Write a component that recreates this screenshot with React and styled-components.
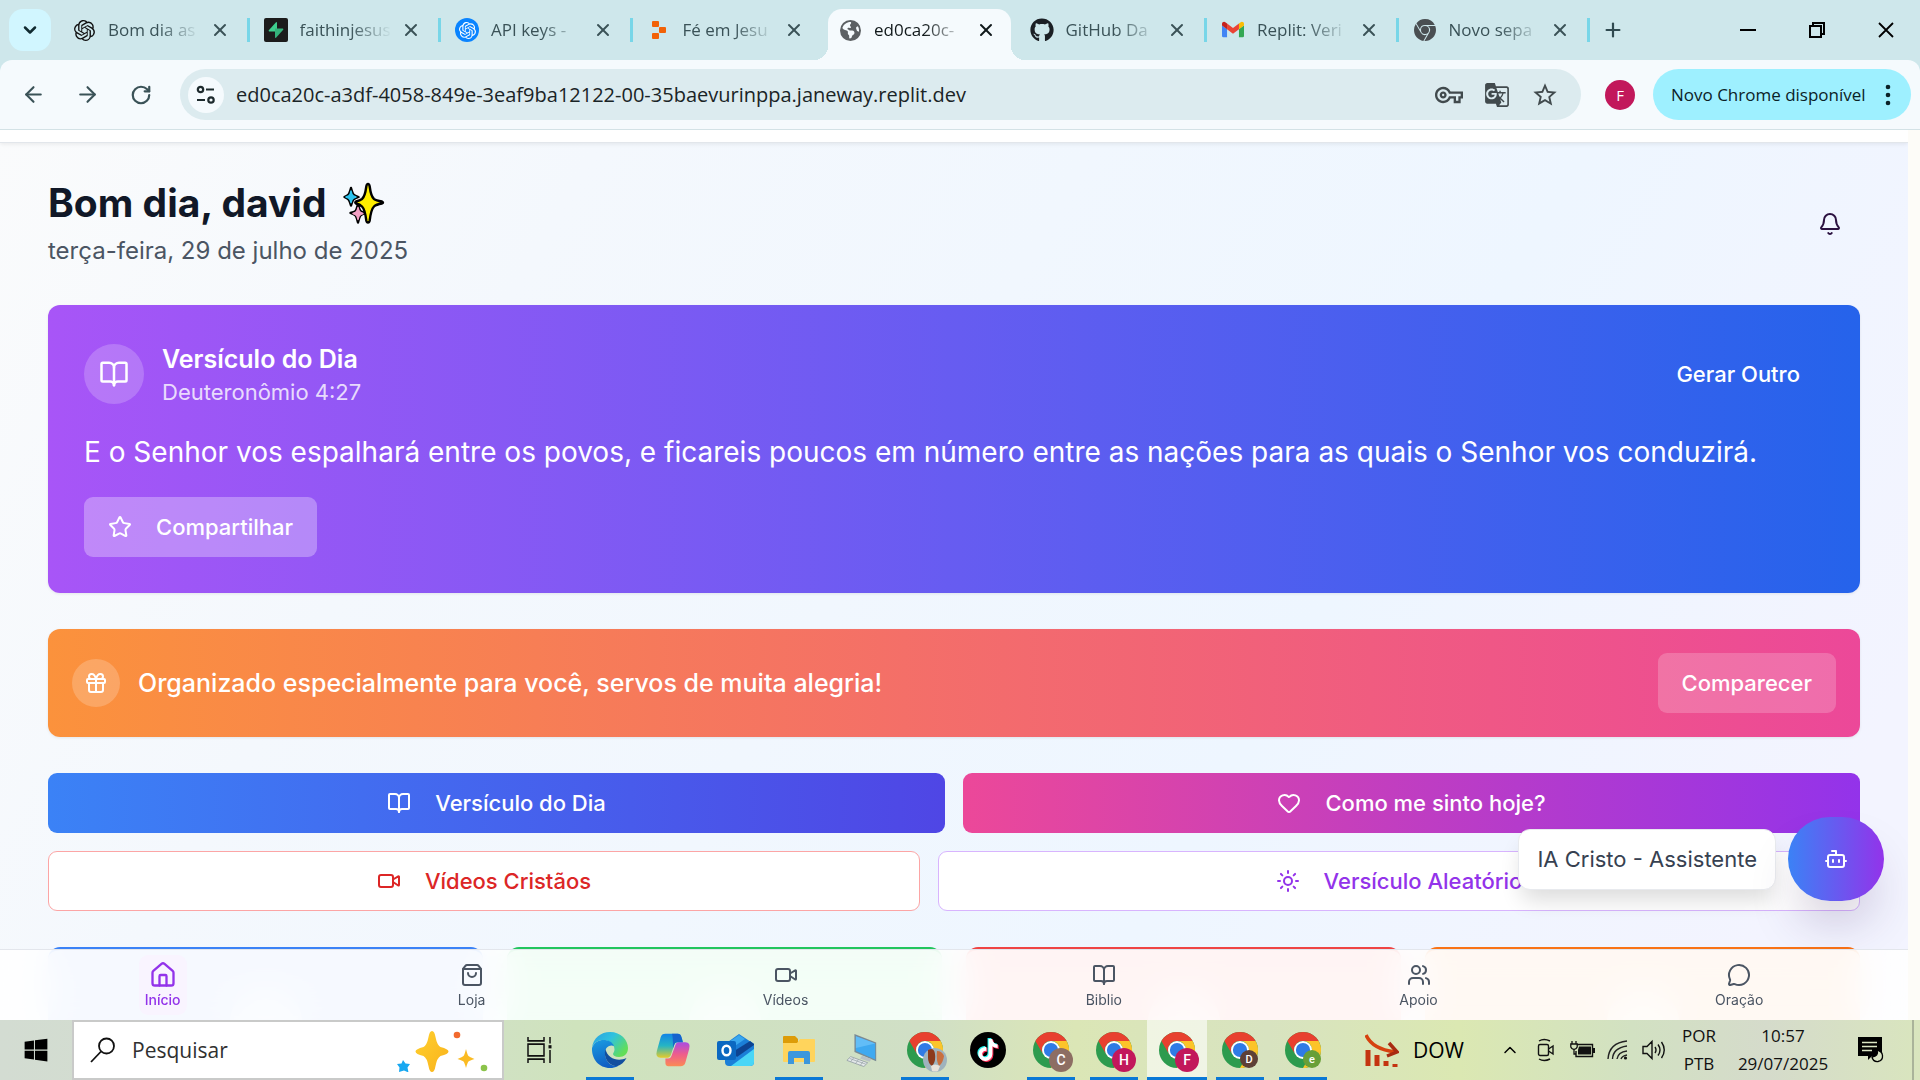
import React from "react";
import styled, { createGlobalStyle, css } from "styled-components";
import {
  ArrowLeft, ArrowRight, Bell, BookOpen, Bot, ChevronDown, ChevronUp, Gift, Heart, House,
  MessageCircle, Plus, RotateCw, ShoppingBag, Star, Sun, Users, Video, X,
} from "lucide-react";
import { SiOpenai, SiGooglechrome } from "react-icons/si";
import { FaGithub, FaEarthAmericas, FaWindows, FaTiktok } from "react-icons/fa6";
import { MdGTranslate, MdOutlineVpnKey, MdStarBorder } from "react-icons/md";

const appFont = `Inter, "Open Sans", sans-serif`;
const systemFont = `"Open Sans", "Noto Sans", sans-serif`;

const GlobalStyle = createGlobalStyle`
  *, *::before, *::after { box-sizing: border-box; }
  body { margin: 0; font-family: ${systemFont}; overflow: hidden; }
  h1, h2, p { margin: 0; }
  button { border: 0; padding: 0; background: none; font: inherit; color: inherit; cursor: pointer; }
  input { font: inherit; }
  a { color: inherit; text-decoration: none; }
  svg { display: block; flex: none; }
`;

const Screen = styled.div`
  height: 100vh;
  display: grid;
  grid-template-columns: minmax(0, 1fr);
  grid-template-rows: auto minmax(0, 1fr) auto;
`;

/* ---------- Browser window ---------- */

const Browser = styled.header`
  background: #cee7eb;
`;

const TabStrip = styled.div`
  height: 60px;
  display: flex;
  align-items: stretch;
`;

const TabSearch = styled.button`
  width: 42px;
  height: 42px;
  margin: 9px 5px 9px 9px;
  border-radius: 14px;
  background: #d1f6ff;
  color: #0f2a30;
  display: grid;
  place-items: center;
`;

const Tabs = styled.div`
  flex: 1;
  display: flex;
  min-width: 0;
`;

const Tab = styled.div`
  flex: 1 1 0;
  min-width: 0;
  position: relative;
  display: flex;
  align-items: center;
  padding: 0 16px;
  color: ${(p) => (p.$active ? "#10181a" : "#3a5257")};

  ${(p) => p.$divider && css`
    &::after {
      content: "";
      position: absolute;
      right: -2px;
      top: 18px;
      width: 3px;
      height: 24px;
      background: #78d6e8;
    }
  `}
`;

const TabShape = styled.div`
  position: absolute;
  inset: 9px 3px 0 6px;
  border-radius: 14px 14px 0 0;
  background: #f5fafd;

  &::before, &::after {
    content: "";
    position: absolute;
    bottom: 0;
    width: 14px;
    height: 14px;
  }
  &::before { left: -14px; background: radial-gradient(circle at 0 0, transparent 14px, #f5fafd 14px); }
  &::after { right: -14px; background: radial-gradient(circle at 100% 0, transparent 14px, #f5fafd 14px); }
`;

const TabIcon = styled.span`
  position: relative;
  width: 24px;
  height: 24px;
  margin-right: 12px;
  display: grid;
  place-items: center;
  flex: none;
`;

const TabTitle = styled.button`
  position: relative;
  flex: 1;
  min-width: 0;
  overflow: hidden;
  white-space: nowrap;
  text-align: left;
  font-size: 17px;
  line-height: 26px;
  mask-image: linear-gradient(to right, #000 50px, transparent 92px);
`;

const TabClose = styled.button`
  position: relative;
  width: 24px;
  height: 24px;
  display: grid;
  place-items: center;
`;

const BlueDisc = styled.span`
  width: 24px;
  height: 24px;
  border-radius: 50%;
  background: #0a84ff;
  color: #fff;
  display: grid;
  place-items: center;
`;

const StripEnd = styled.div`
  width: 332px;
  display: flex;
  justify-content: space-between;
`;

const NewTab = styled.button`
  width: 50px;
  display: grid;
  place-items: center;
  color: #304a50;
`;

const WindowButtons = styled.div`
  display: flex;
`;

const WindowButton = styled.button`
  width: 69px;
  display: grid;
  place-items: center;
  color: #000;
`;

const Toolbar = styled.div`
  height: 70px;
  padding: 9px 9px 9px 6px;
  display: flex;
  align-items: center;
  background: #f5fafd;
  border-radius: 12px 12px 0 0;
  border-bottom: 1px solid #d3e2e6;
`;

const ToolButton = styled.button`
  width: 54px;
  height: 51px;
  display: grid;
  place-items: center;
  color: #3a5257;
`;

const Omnibox = styled.label`
  flex: 1;
  height: 51px;
  margin-left: 12px;
  padding: 0 12px 0 8px;
  display: flex;
  align-items: center;
  background: #dcebef;
  border-radius: 26px;
`;

const SiteInfo = styled.button`
  width: 36px;
  height: 36px;
  border-radius: 50%;
  background: #f5fafd;
  display: grid;
  place-items: center;
`;

const UrlInput = styled.input`
  flex: 1;
  min-width: 0;
  margin-left: 12px;
  padding: 0;
  border: 0;
  outline: 0;
  background: none;
  font-size: 20px;
  line-height: 30px;
  color: #1a2426;
`;

const OmniButton = styled.button`
  width: 48px;
  height: 48px;
  display: grid;
  place-items: center;
  color: #414a4d;
`;

const Profile = styled.button`
  width: 30px;
  height: 30px;
  margin: 0 18px 0 24px;
  border-radius: 50%;
  background: #c2185b;
  color: #fff;
  font-size: 15px;
`;

const UpdateButton = styled.button`
  height: 51px;
  width: 258px;
  padding: 0 20px 0 18px;
  display: flex;
  align-items: center;
  justify-content: space-between;
  border-radius: 26px;
  background: #9ef0ff;
  color: #0b2227;
  font-size: 17px;
  white-space: nowrap;
`;

/* ---------- Page ---------- */

const Viewport = styled.div`
  min-height: 0;
  display: flex;
  background: #fdfcf8;
`;

const Page = styled.div`
  position: relative;
  flex: 1;
  min-width: 0;
  margin-right: 12px;
  overflow: hidden;
  font-family: ${appFont};
  background: linear-gradient(120deg, #fafbfc 0%, #f4f8fd 25%, #eef6ff 66%, #f3f4ff 92%);
`;

const PageTop = styled.div`
  height: 13px;
  background: #fff;
  border-bottom: 1px solid #e2e6eb;
  box-shadow: 0 1px 4px rgba(0, 0, 0, 0.08);
`;

const Content = styled.main`
  padding: 36px 48px;
  display: flex;
  flex-direction: column;
  gap: 36px;
`;

const Greeting = styled.div`
  display: flex;
  align-items: center;
  justify-content: space-between;
`;

const GreetingTitle = styled.h1`
  display: flex;
  align-items: center;
  gap: 16px;
  margin-bottom: 6px;
  font-size: 39px;
  line-height: 48px;
  font-weight: 700;
  color: #111827;
`;

const Today = styled.p`
  font-size: 24px;
  line-height: 36px;
  color: #4b5563;
`;

const BellButton = styled.button`
  width: 60px;
  height: 60px;
  display: grid;
  place-items: center;
  color: #2b1140;
`;

const VerseCard = styled.section`
  padding: 36px;
  border-radius: 12px;
  background: linear-gradient(to right, #a855f7, #2563eb);
  color: #fff;
  display: flex;
  flex-direction: column;
  align-items: flex-start;
  gap: 24px;
  box-shadow: 0 1px 3px rgba(0, 0, 0, 0.08);
`;

const VerseHead = styled.div`
  width: 100%;
  display: flex;
  align-items: center;
  gap: 18px;
`;

const Disc = styled.span`
  width: ${(p) => p.$size}px;
  height: ${(p) => p.$size}px;
  flex: none;
  border-radius: 50%;
  background: rgba(255, 255, 255, 0.2);
  display: grid;
  place-items: center;
`;

const VerseTitles = styled.div`
  flex: 1;
`;

const VerseTitle = styled.h2`
  font-size: 25px;
  line-height: 36px;
  font-weight: 600;
`;

const VerseRef = styled.p`
  font-size: 22px;
  line-height: 30px;
  color: rgba(255, 255, 255, 0.8);
`;

const VerseText = styled.p`
  font-size: 28px;
  line-height: 42px;
`;

const CardButton = styled.button`
  height: 60px;
  padding: 0 24px;
  display: flex;
  align-items: center;
  gap: 24px;
  border-radius: 9px;
  background: ${(p) => (p.$ghost ? "none" : `rgba(255, 255, 255, ${p.$tint})`)};
  font-size: 22px;
  font-weight: 500;
  color: #fff;
`;

const Banner = styled.section`
  padding: 24px;
  display: flex;
  align-items: center;
  gap: 18px;
  border-radius: 12px;
  background: linear-gradient(to right, #fb923c, #ec4899);
  color: #fff;
  box-shadow: 0 1px 3px rgba(0, 0, 0, 0.08);
`;

const BannerText = styled.p`
  flex: 1;
  font-size: 25px;
  line-height: 36px;
  font-weight: 500;
`;

const Actions = styled.div`
  display: grid;
  gap: 18px;
`;

const ActionRow = styled.div`
  display: grid;
  grid-template-columns: ${(p) => p.$columns};
  gap: 18px;
`;

const Action = styled.button`
  height: 60px;
  display: flex;
  align-items: center;
  justify-content: center;
  gap: 24px;
  border-radius: 9px;
  font-size: 22px;
  font-weight: 500;
  color: #fff;
  background: linear-gradient(to right, ${(p) => p.$from}, ${(p) => p.$to});
`;

const OutlineAction = styled(Action)`
  background: #fff;
  border: 1px solid ${(p) => p.$line};
  color: ${(p) => p.$ink};
`;

const Tiles = styled.div`
  display: grid;
  grid-template-columns: repeat(4, 1fr);
  gap: 24px;
`;

const Tile = styled.section`
  height: 210px;
  padding-top: 36px;
  display: flex;
  justify-content: center;
  border-radius: 12px;
  border-top: 3px solid ${(p) => p.$edge};
  background: ${(p) => p.$fill};
`;

const TileSpot = styled.span`
  width: 72px;
  height: 72px;
  border-radius: 50%;
  background: rgba(255, 255, 255, 0.5);
`;

const Nav = styled.nav`
  position: absolute;
  left: 0;
  right: 0;
  bottom: 0;
  height: 71px;
  padding: 0 6px;
  display: flex;
  justify-content: space-around;
  align-items: center;
  background: rgba(255, 255, 255, 0.85);
  backdrop-filter: blur(16px);
  border-top: 1px solid #e3e6ec;
`;

const NavLink = styled.a`
  padding: 6px;
  display: flex;
  flex-direction: column;
  align-items: center;
  gap: 2px;
  border-radius: 9px;
  font-size: 14px;
  line-height: 18px;
  font-weight: ${(p) => (p.$active ? 500 : 400)};
  color: ${(p) => (p.$active ? "#9333ea" : "#4b5563")};
  background: ${(p) => (p.$active ? "rgba(250, 240, 255, 0.6)" : "none")};
`;

const NavIcon = styled.span`
  height: 28px;
  display: grid;
  place-items: center;
`;

const Assistant = styled.div`
  position: absolute;
  right: 24px;
  bottom: 119px;
  display: flex;
  align-items: center;
  gap: 12px;
`;

const AssistantHint = styled.span`
  height: 61px;
  padding: 0 18px;
  display: flex;
  align-items: center;
  background: #fff;
  border: 1px solid #e8eaee;
  border-radius: 12px;
  font-size: 22px;
  font-weight: 400;
  color: #374151;
  box-shadow: 0 14px 22px -4px rgba(0, 0, 0, 0.14);
`;

const AssistantButton = styled.button`
  width: 96px;
  height: 84px;
  border-radius: 42px;
  display: grid;
  place-items: center;
  color: #fff;
  background: linear-gradient(to right, #3b82f6, #9333ea);
  box-shadow: 0 30px 50px -12px rgba(60, 30, 90, 0.25);
`;

/* ---------- Taskbar ---------- */

const Taskbar = styled.footer`
  height: 60px;
  display: flex;
  align-items: stretch;
  background: linear-gradient(to right, #d3dcd2 0%, #d2dfcb 20%, #cfe3bd 30%, #d0dfc6 48%, #dbe6b6 56%, #d8e3c0 66%, #dbe8b2 76%, #d2e1c2 85%, #d5dbcb 92%, #d9e5be 100%);
  color: #000;
`;

const StartButton = styled.button`
  width: 72px;
  display: grid;
  place-items: center;
`;

const SearchBox = styled.label`
  width: 432px;
  padding: 0 13px 0 16px;
  display: flex;
  align-items: center;
  gap: 16px;
  background: #fff;
  border: 2px solid #c9cac9;
`;

const SearchInput = styled.input`
  flex: 1;
  min-width: 0;
  padding: 0;
  border: 0;
  outline: 0;
  background: none;
  font-size: 21px;
  color: #303030;
  &::placeholder { color: #303030; opacity: 1; }
`;

const TaskView = styled.button`
  width: 76px;
  padding-right: 4px;
  display: grid;
  place-items: center;
`;

const AppButtons = styled.div`
  display: flex;
  gap: 3px;
`;

const AppButton = styled.button`
  width: 60px;
  position: relative;
  display: grid;
  place-items: center;
  background: ${(p) => (p.$active ? "rgba(255, 255, 255, 0.6)" : "none")};

  ${(p) => p.$running && css`
    &::after {
      content: "";
      position: absolute;
      bottom: 0;
      left: ${p.$active ? 0 : 6}px;
      right: ${p.$active ? 0 : 6}px;
      height: 3px;
      background: #0a78d6;
    }
  `}
`;

const ChromeApp = styled.span`
  position: relative;
  display: block;
`;

const Badge = styled.span`
  position: absolute;
  right: ${(p) => (p.$small ? 0 : -4)}px;
  bottom: ${(p) => (p.$small ? 0 : -4)}px;
  width: ${(p) => (p.$small ? 18 : 24)}px;
  height: ${(p) => (p.$small ? 18 : 24)}px;
  border-radius: 50%;
  background: ${(p) => p.$fill};
  color: #fff;
  font: 500 ${(p) => (p.$small ? 11 : 14)}px/1 Roboto, sans-serif;
  display: grid;
  place-items: center;
`;

const Tray = styled.div`
  margin-left: auto;
  display: flex;
  align-items: center;
`;

const Market = styled.button`
  display: flex;
  align-items: center;
  gap: 14px;
  margin-right: 28px;
  font-size: 21px;
`;

const TrayButton = styled.button`
  width: 36px;
  height: 60px;
  display: grid;
  place-items: center;
`;

const TrayText = styled.button`
  width: ${(p) => p.$width}px;
  font-size: 17px;
  line-height: 28px;
  text-align: center;
  color: #111;
`;

const Notifications = styled.button`
  width: 72px;
  height: 60px;
  padding-right: 10px;
  display: grid;
  place-items: center;
`;

const ShowDesktop = styled.button`
  width: 8px;
  height: 60px;
  border-left: 2px solid #aab39a;
`;

/* ---------- Drawings ---------- */

const SparklesArt = () => (
  <svg width="42" height="42" viewBox="0 0 42 42" stroke="#000" strokeWidth="2.400" strokeLinejoin="round">
    <path d="M15 22q1.500 6 2.500 7 1 1 5 2-4 1.500-5 2.500-1 1-2.500 7-1.500-6-2.500-7-1-1-5-2.500 4-1 5-2 1-1 2.500-7Z" fill="#000" />
    <path d="M15 25.500q.6 4 2.500 5l2.500 1-2.500 1q-1.900 1-2.500 5-.6-4-2.500-5l-2.500-1 2.500-1q1.900-1 2.500-5Z" fill="#f4a0c4" stroke="#f4a0c4" strokeWidth="1.500" />
    <path d="M8 6q1.500 5.500 2.500 6.500 1 1 5 2.500-4 1.500-5 2.500Q9.500 18.500 8 23.500q-1.500-5-2.500-6-1-1-4-2.500 3-1.500 4-2.500Q6.500 11.500 8 6Z" fill="#000" />
    <path d="M8 9q.6 4 2.500 5l2.500 1-2.500 1q-1.900 1-2.500 4.500-.6-3.500-2.500-4.500L3 15l2.500-1Q7.400 13 8 9Z" fill="#2cc4f0" stroke="#2cc4f0" strokeWidth="1.500" />
    <path d="M25 2q1.300 0 1.700 2.500Q28 14.500 31 17q2 1.500 8 2.500 2 1 0 2-6 1-8 3-3 3-4.300 14Q26.300 40.500 25 40.500T23.300 38.500Q22 27.500 19 24.500q-2-2-6-3-1.500-1 0-2 4-1 6-2.500 3-2.500 4.300-12.500Q23.700 2 25 2Z" fill="#ffee00" />
  </svg>
);

const SupabaseArt = () => (
  <svg width="24" height="24" viewBox="0 0 24 24">
    <rect width="24" height="24" rx="2" fill="#1c1c1c" />
    <path d="M13 4.500v9H5.200q-1-.3-.4-1.300L12 4.300q.8-.6 1 .2Z" fill="#3ecf8e" />
    <path d="M11 19.500v-9h7.800q1 .3.4 1.300L12 19.700q-.8.6-1-.2Z" fill="#34b27b" />
  </svg>
);

const ReplitArt = () => (
  <svg width="24" height="24" viewBox="0 0 24 24" fill="#f26207">
    <rect x="5" y="3" width="7" height="6" rx="1" />
    <rect x="12" y="9" width="7" height="6" rx="1" />
    <rect x="5" y="15" width="7" height="6" rx="1" />
  </svg>
);

const GmailArt = () => (
  <svg width="22" height="22" viewBox="0 0 24 24">
    <path d="M0 7v11.500Q0 20 1.500 20H5.500V11Z" fill="#4285f4" />
    <path d="M24 7v11.500q0 1.500-1.500 1.500H18.500V11Z" fill="#34a853" />
    <path d="M18.500 5v6.200L24 7V5.500C24 3 21.500 2.500 20 3.700Z" fill="#fbbc04" />
    <path d="M5.500 5v6.200L0 7V5.500C0 3 2.500 2.500 4 3.700Z" fill="#c5221f" />
    <path d="M5.500 11.200V5L12 9.800 18.500 5v6.200L12 16Z" fill="#ea4335" />
  </svg>
);

const TuneArt = () => (
  <svg width="20" height="22" viewBox="0 0 20 22" fill="none" stroke="#1d2a2d" strokeWidth="2.200">
    <circle cx="4.500" cy="5.500" r="2.700" /><path d="M10 5.500h8M1 16h8" /><circle cx="15" cy="16" r="2.700" />
  </svg>
);

const DotsArt = () => (
  <svg width="6" height="22" viewBox="0 0 6 22" fill="#0b2227">
    <circle cx="3" cy="3" r="2.300" /><circle cx="3" cy="11" r="2.300" /><circle cx="3" cy="19" r="2.300" />
  </svg>
);

const MinimizeArt = () => (
  <svg width="16" height="16" viewBox="0 0 16 16"><path d="M0 8h16" stroke="#000" strokeWidth="2" /></svg>
);

const RestoreArt = () => (
  <svg width="16" height="16" viewBox="0 0 16 16" fill="none" stroke="#000" strokeWidth="2">
    <path d="M1 4h11v11H1zM4 4V1h11v11h-3" />
  </svg>
);

const CloseArt = () => (
  <svg width="16" height="16" viewBox="0 0 16 16"><path d="M1 1l14 14M15 1L1 15" stroke="#000" strokeWidth="1.800" /></svg>
);

const LensArt = () => (
  <svg width="26" height="26" viewBox="0 0 26 26" fill="none" stroke="#111" strokeWidth="1.800">
    <circle cx="16.500" cy="9" r="7.500" /><path d="M11 14.500L1 25" />
  </svg>
);

const SearchArt = () => (
  <svg width="92" height="44" viewBox="0 0 92 44">
    <defs>
      <linearGradient id="gold" x1="0" y1="0" x2="1" y2="1">
        <stop offset="0" stopColor="#ffd02e" /><stop offset="1" stopColor="#f9b21c" />
      </linearGradient>
    </defs>
    <path d="M35 3q2.500 0 3.500 6 1.500 8 5 10 8 2 8 4.500t-8 4.500q-3.500 2-5 10-1 6-3.500 6t-3.500-6q-1.500-8-5-10-8-2-8-4.500t8-4.500q3.500-2 5-10 1-6 3.500-6Z" fill="url(#gold)" />
    <path d="M69 21q1.500 6 2.500 7 1 1 6 3-5 1.500-6 2.500T69 40q-1.500-5.500-2.500-6.500t-6-2.500q5-2 6-3 1-1 2.500-7Z" fill="#fbbb22" />
    <path d="M6 32l2.500 3.500 4.500.5-2.500 3.500 1 5-4.500-2-5 1.500.5-4.500L0 36l4.500-.5Z" fill="#18a8f1" />
    <circle cx="60" cy="7" r="3.300" fill="#f26a2e" /><circle cx="87" cy="40" r="3.300" fill="#8bc34a" />
  </svg>
);

const TaskViewArt = () => (
  <svg width="26" height="28" viewBox="0 0 26 26" preserveAspectRatio="none" fill="none" stroke="#111" strokeWidth="1.500">
    <path d="M1 7.500h16v11H1zM1 1v3.500h16V1M1 25v-3.500h16V25M23 1v6M23 13v12" />
    <path d="M21.500 8.500h3v3h-3z" fill="#111" stroke="none" />
  </svg>
);

const EdgeArt = () => (
  <svg width="38" height="38" viewBox="0 0 38 38">
    <defs>
      <linearGradient id="edgeTop" x1="0" y1="0" x2="1" y2=".6">
        <stop offset="0" stopColor="#2a9fe0" /><stop offset=".5" stopColor="#2fc2df" /><stop offset="1" stopColor="#62de58" />
      </linearGradient>
      <linearGradient id="edgeLow" x1="0" y1="0" x2=".3" y2="1">
        <stop offset="0" stopColor="#1b9de2" /><stop offset="1" stopColor="#0f5fc4" />
      </linearGradient>
    </defs>
    <path d="M1 17C2 7 10 1 19 1c11 0 18 8 18 16 0 6-4 9-9 9-4 0-6-1.500-6-3 0-1 1.500-2 1.500-4.500C23.500 13 18 9 12 9 6 9 2 13 1 17Z" fill="url(#edgeTop)" />
    <path d="M1 17C3 11 8 9 12.500 9c5 0 9 2 10.500 6-4-2-9 1-9 7 0 8 6 14 13 13-3 1.500-5 2-8 2C8 37 .5 28 1 17Z" fill="url(#edgeLow)" />
    <path d="M14.500 18C12 26 17 35 26 35.300c4-1.300 7.500-4.300 9.500-8.300-8 4-19 1-21-9Z" fill="#124f9f" />
  </svg>
);

const CopilotArt = () => (
  <svg width="36" height="34" viewBox="0 0 38 40" preserveAspectRatio="none">
    <defs>
      <linearGradient id="copA" x1="0" y1="0" x2="0" y2="1">
        <stop offset="0" stopColor="#1384e6" /><stop offset=".5" stopColor="#25b5c4" /><stop offset="1" stopColor="#e4cb2b" />
      </linearGradient>
      <linearGradient id="copB" x1="0" y1="0" x2="0" y2="1">
        <stop offset="0" stopColor="#a94de2" /><stop offset=".5" stopColor="#ee5d8c" /><stop offset="1" stopColor="#fb8a55" />
      </linearGradient>
    </defs>
    <path d="M11 1h13q3 0 4 4l1.500 6H24q-3 0-4 4l-3 10q-1 4-4 4H6q-6 0-4-8L6 5q1-4 5-4Z" fill="url(#copA)" />
    <path d="M27 39H14q-3 0-3-4v-5h3q3 0 4-5l3-9q1-5 4-5h7q6 0 4 8l-4 16q-1 4-5 4Z" fill="url(#copB)" />
    <path d="M18 1h6q3 0 4 4l1.500 6H24q-3 0-4 4l-1 3q0-13-1-17Z" fill="#1657c9" opacity=".8" />
  </svg>
);

const OutlookArt = () => (
  <svg width="38" height="34" viewBox="0 0 38 34">
    <path d="M8 11L22 1l15 10v18q0 4-4 4H12q-4 0-4-4Z" fill="#1b7fd8" />
    <path d="M12 9l10-7 6 4-16 11ZM37 11l-4-3-19 13 4 4Z" fill="#39a7ee" />
    <path d="M37 12L20 24l-6-4 19-12 4 3Z" fill="#0d4391" />
    <path d="M37 16v13q0 4-4 4H14Z" fill="#49d6f7" />
    <rect y="8" width="19" height="19" rx="2" fill="#0b68c1" />
    <ellipse cx="9.500" cy="17.500" rx="4" ry="4.800" fill="none" stroke="#fff" strokeWidth="2.400" />
  </svg>
);

const FolderArt = () => (
  <svg width="34" height="30" viewBox="0 0 34 30">
    <path d="M1 2q0-1 1-1h11l3 3v6H1Z" fill="#dd9c08" />
    <path d="M1 8h14l3-4h14q1 0 1 1v21q0 1-1 1H2q-1 0-1-1Z" fill="#ffd45c" />
    <path d="M6 29V18q0-2 2-2h18q2 0 2 2v11h-6v-6H12v6Z" fill="#3c97dc" />
  </svg>
);

const PcArt = () => (
  <svg width="34" height="34" viewBox="0 0 34 36">
    <path d="M9 1l23 9v20L9 20Z" fill="#7a8a94" /><path d="M10.500 3.500L31 11v17L10.500 19Z" fill="#3fa9f0" />
    <path d="M10.500 3.500L31 11 10.500 16Z" fill="#62bdf7" />
    <path d="M17 24l10 3.500-2 3-10-3.500Z" fill="#b8c1c6" /><path d="M5 25l18 6.500-4 4L1 29Z" fill="#e4e8ea" stroke="#8c989e" strokeWidth=".8" />
    <path d="M4 27l17 6M8 26.500l-3 4M13 28.500l-3 4M18 30.500l-3 4" stroke="#98a3a8" strokeWidth=".8" />
  </svg>
);

const ChromeArt = () => (
  <svg width="36" height="36" viewBox="2 2 44 44">
    <circle cx="24" cy="24" r="22" fill="#2d9b4e" />
    <path d="M24 13H43.050A22 22 0 0 0 4.950 13L14.470 29.500A11 11 0 0 1 24 13Z" fill="#e8402f" />
    <path d="M43.050 13A22 22 0 0 1 24 46L33.530 29.500A11 11 0 0 0 24 13Z" fill="#fcc42a" />
    <circle cx="24" cy="24" r="11" fill="#fff" /><circle cx="24" cy="24" r="8.700" fill="#2f7be5" />
  </svg>
);

const PhotoArt = () => (
  <svg width="24" height="24" viewBox="0 0 24 24">
    <circle cx="12" cy="12" r="12" fill="#9fb3bd" />
    <path d="M5 2q6-3 7 4 1 8-3 12-4-3-4-8Z" fill="#8c3a1c" />
    <path d="M14 3q5 0 7 5-1 7-5 10-3-5-2-15Z" fill="#c9703f" />
    <path d="M8 18q4-3 9 0l-2 5q-3 1-6 0Z" fill="#e8e2da" />
  </svg>
);

const TikTokDisc = styled.span`
  width: 36px;
  height: 36px;
  border-radius: 50%;
  background: #000;
  color: #fff;
  display: grid;
  place-items: center;
  svg { filter: drop-shadow(-1px -1px 0 #25f4ee) drop-shadow(1px 1px 0 #fe2c55); }
`;

const MarketArt = () => (
  <svg width="34" height="34" viewBox="0 0 34 34">
    <path d="M1 2q6 14 29 17" fill="none" stroke="#d6420f" strokeWidth="3.500" />
    <path d="M24 10l8 9-10 4" fill="none" stroke="#a92b12" strokeWidth="3.500" />
    <path d="M3 17v16M12 22v11M21 28v5M30 31v3" stroke="#c43410" strokeWidth="5" />
  </svg>
);

const CameraArt = () => (
  <svg width="18" height="24" viewBox="0 0 18 24" fill="none" stroke="#111" strokeWidth="1.400">
    <rect x="1.500" y="6.500" width="10" height="11" rx="1.500" /><path d="M11.500 11l4.500-3v8l-4.500-3M2 3q5-3 11 0M2 21q5 3 11 0" />
  </svg>
);

const BatteryArt = () => (
  <svg width="25" height="18" viewBox="0 0 25 18">
    <path d="M7 3.500h15.500v12H6V10" fill="none" stroke="#111" strokeWidth="1.400" />
    <path d="M9 5.500h12v8H8V9ZM23 7h2v5h-2z" fill="#111" />
    <path d="M2 0v3M6 0v3M.8 3h6.400v3q-1 2.500-3.200 2.500T.8 6ZM4 9v4h2" fill="none" stroke="#111" strokeWidth="1.300" />
  </svg>
);

const WifiArt = () => (
  <svg width="22" height="22" viewBox="0 0 22 22" fill="none" stroke="#222" strokeWidth="1.400">
    <path d="M1 20Q2 4 20 2M5.500 20Q6 9 20 7M10 20q1-7 10-8M14 20q1-3 6-4" /><circle cx="18.500" cy="19" r="1.600" fill="#111" stroke="none" />
  </svg>
);

const VolumeArt = () => (
  <svg width="24" height="22" viewBox="0 0 24 22" fill="none" stroke="#111" strokeWidth="1.400">
    <path d="M1 7.500h4L10 2.500v17L5 14.500H1ZM13 8q2 3 0 6M16 5.500q4 5.500 0 11M19.500 3q5.500 8 0 16" />
  </svg>
);

const NoticeArt = () => (
  <svg width="26" height="26" viewBox="0 0 26 26">
    <path d="M0 0h24v19H14l-4 4v-4H0Z" fill="#000" />
    <path d="M4 5.500h15M4 9.500h15M4 13.500h10" stroke="#dbe5c4" strokeWidth="1.300" />
    <path d="M19 13q2 6-5 7 1 5 6 4.500 5-1 4.500-6Q24 14 19 13Z" fill="#dbe5c4" stroke="#000" strokeWidth="1.300" />
  </svg>
);

/* ---------- Data ---------- */

const tabs = [
  { title: "Bom dia as", icon: <SiOpenai size={21} color="#111" />, divider: true },
  { title: "faithinjesus", icon: <SupabaseArt />, divider: true },
  { title: "API keys -", icon: <BlueDisc><SiOpenai size={17} /></BlueDisc>, divider: true },
  { title: "Fé em Jesu", icon: <ReplitArt /> },
  { title: "ed0ca20c-", icon: <FaEarthAmericas size={21} color="#5c6063" />, active: true },
  { title: "GitHub Da", icon: <FaGithub size={24} color="#1b1f24" />, divider: true },
  { title: "Replit: Veri", icon: <GmailArt />, divider: true },
  { title: "Novo sepa", icon: <SiGooglechrome size={22} color="#4a4f52" />, divider: true },
];

const tiles = [
  { edge: "#3b82f6", fill: "#c3d7ff" },
  { edge: "#22c55e", fill: "#b2f3c8" },
  { edge: "#ef4444", fill: "#ffb9b6" },
  { edge: "#f97316", fill: "#ffd3b0" },
];

const navItems = [
  { label: "Início", Icon: House, active: true },
  { label: "Loja", Icon: ShoppingBag },
  { label: "Vídeos", Icon: Video },
  { label: "Biblio", Icon: BookOpen },
  { label: "Apoio", Icon: Users },
  { label: "Oração", Icon: MessageCircle },
];

const apps = [
  { name: "Microsoft Edge", art: <EdgeArt />, running: true },
  { name: "Copilot", art: <CopilotArt /> },
  { name: "Outlook", art: <OutlookArt /> },
  { name: "Explorador", art: <FolderArt />, running: true },
  { name: "Este computador", art: <PcArt /> },
  { name: "Chrome", art: <ChromeArt />, badge: { photo: true }, running: true },
  { name: "TikTok", art: <TikTokDisc><FaTiktok size={22} /></TikTokDisc> },
  { name: "Chrome C", art: <ChromeArt />, badge: { letter: "C", fill: "#8d6e63" }, running: true },
  { name: "Chrome H", art: <ChromeArt />, badge: { letter: "H", fill: "#c2185b" }, running: true },
  { name: "Chrome F", art: <ChromeArt />, badge: { letter: "F", fill: "#c2185b" }, running: true, active: true },
  { name: "Chrome D", art: <ChromeArt />, badge: { letter: "D", fill: "#5d4037", small: true }, running: true },
  { name: "Chrome E", art: <ChromeArt />, badge: { letter: "e", fill: "#689f38", small: true }, running: true },
];

/* ---------- Sections ---------- */

const BrowserChrome = () => (
  <Browser>
    <TabStrip>
      <TabSearch aria-label="Pesquisar separadores"><ChevronDown size={20} strokeWidth={3} /></TabSearch>
      <Tabs>
        {tabs.map((t) => (
          <Tab key={t.title} $active={t.active} $divider={t.divider}>
            {t.active && <TabShape />}
            <TabIcon>{t.icon}</TabIcon>
            <TabTitle>{t.title}</TabTitle>
            <TabClose aria-label="Fechar separador"><X size={20} strokeWidth={2.4} /></TabClose>
          </Tab>
        ))}
      </Tabs>
      <StripEnd>
        <NewTab aria-label="Novo separador"><Plus size={22} strokeWidth={2.4} /></NewTab>
        <WindowButtons>
          <WindowButton aria-label="Minimizar"><MinimizeArt /></WindowButton>
          <WindowButton aria-label="Restaurar"><RestoreArt /></WindowButton>
          <WindowButton aria-label="Fechar"><CloseArt /></WindowButton>
        </WindowButtons>
      </StripEnd>
    </TabStrip>
    <Toolbar>
      <ToolButton aria-label="Voltar"><ArrowLeft size={25} /></ToolButton>
      <ToolButton aria-label="Avançar"><ArrowRight size={25} /></ToolButton>
      <ToolButton aria-label="Recarregar"><RotateCw size={22} strokeWidth={2.4} /></ToolButton>
      <Omnibox>
        <SiteInfo aria-label="Informações do site"><TuneArt /></SiteInfo>
        <UrlInput
          aria-label="Endereço"
          defaultValue="ed0ca20c-a3df-4058-849e-3eaf9ba12122-00-35baevurinppa.janeway.replit.dev"
        />
        <OmniButton aria-label="Palavras-passe"><MdOutlineVpnKey size={28} /></OmniButton>
        <OmniButton aria-label="Traduzir"><MdGTranslate size={26} /></OmniButton>
        <OmniButton aria-label="Favorito"><MdStarBorder size={28} /></OmniButton>
      </Omnibox>
      <Profile>F</Profile>
      <UpdateButton>Novo Chrome disponível<DotsArt /></UpdateButton>
    </Toolbar>
  </Browser>
);

const DevotionalPage = () => (
  <Viewport>
    <Page>
      <PageTop />
      <Content>
        <Greeting>
          <div>
            <GreetingTitle>Bom dia, david<SparklesArt /></GreetingTitle>
            <Today>terça-feira, 29 de julho de 2025</Today>
          </div>
          <BellButton aria-label="Notificações"><Bell size={24} /></BellButton>
        </Greeting>

        <VerseCard>
          <VerseHead>
            <Disc $size={60}><BookOpen size={30} /></Disc>
            <VerseTitles>
              <VerseTitle>Versículo do Dia</VerseTitle>
              <VerseRef>Deuteronômio 4:27</VerseRef>
            </VerseTitles>
            <CardButton $ghost>Gerar Outro</CardButton>
          </VerseHead>
          <VerseText>
            E o Senhor vos espalhará entre os povos, e ficareis poucos em número entre as nações para as quais o Senhor vos conduzirá.
          </VerseText>
          <CardButton $tint={0.3}><Star size={24} />Compartilhar</CardButton>
        </VerseCard>

        <Banner>
          <Disc $size={48}><Gift size={24} /></Disc>
          <BannerText>Organizado especialmente para você, servos de muita alegria!</BannerText>
          <CardButton $tint={0.2}>Comparecer</CardButton>
        </Banner>

        <Actions>
          <ActionRow $columns="1fr 1fr">
            <Action $from="#3b82f6" $to="#4f46e5"><BookOpen size={24} />Versículo do Dia</Action>
            <Action $from="#ec4899" $to="#9333ea"><Heart size={24} />Como me sinto hoje?</Action>
          </ActionRow>
          <ActionRow $columns="436fr 461fr">
            <OutlineAction $line="#fca5a5" $ink="#dc2626"><Video size={24} />Vídeos Cristãos</OutlineAction>
            <OutlineAction $line="#d8b4fe" $ink="#9333ea"><Sun size={24} />Versículo Aleatório</OutlineAction>
          </ActionRow>
        </Actions>

        <Tiles>
          {tiles.map((t) => (
            <Tile key={t.edge} $edge={t.edge} $fill={t.fill}><TileSpot /></Tile>
          ))}
        </Tiles>
      </Content>

      <Assistant>
        <AssistantHint>IA Cristo - Assistente</AssistantHint>
        <AssistantButton aria-label="Abrir assistente"><Bot size={24} /></AssistantButton>
      </Assistant>

      <Nav>
        {navItems.map(({ label, Icon, active }) => (
          <NavLink key={label} href="#" $active={active}>
            <NavIcon><Icon size={active ? 28 : 24} /></NavIcon>
            {label}
          </NavLink>
        ))}
      </Nav>
    </Page>
  </Viewport>
);

const WindowsTaskbar = () => (
  <Taskbar>
    <StartButton aria-label="Iniciar"><FaWindows size={26} /></StartButton>
    <SearchBox>
      <LensArt />
      <SearchInput aria-label="Pesquisar" placeholder="Pesquisar" />
      <SearchArt />
    </SearchBox>
    <TaskView aria-label="Vista de tarefas"><TaskViewArt /></TaskView>
    <AppButtons>
      {apps.map((a) => (
        <AppButton key={a.name} aria-label={a.name} $running={a.running} $active={a.active}>
          <ChromeApp>
            {a.art}
            {a.badge && (
              <Badge $fill={a.badge.fill || "none"} $small={a.badge.small}>
                {a.badge.photo ? <PhotoArt /> : a.badge.letter}
              </Badge>
            )}
          </ChromeApp>
        </AppButton>
      ))}
    </AppButtons>
    <Tray>
      <Market><MarketArt />DOW</Market>
      <TrayButton aria-label="Ícones ocultos"><ChevronUp size={20} strokeWidth={1.8} /></TrayButton>
      <TrayButton aria-label="Câmara"><CameraArt /></TrayButton>
      <TrayButton aria-label="Bateria"><BatteryArt /></TrayButton>
      <TrayButton aria-label="Rede"><WifiArt /></TrayButton>
      <TrayButton aria-label="Volume"><VolumeArt /></TrayButton>
      <TrayText $width={54}>POR<br />PTB</TrayText>
      <TrayText $width={114}>10:57<br />29/07/2025</TrayText>
      <Notifications aria-label="Centro de ação"><NoticeArt /></Notifications>
      <ShowDesktop aria-label="Mostrar ambiente de trabalho" />
    </Tray>
  </Taskbar>
);

export default function App() {
  return (
    <Screen>
      <GlobalStyle />
      <BrowserChrome />
      <DevotionalPage />
      <WindowsTaskbar />
    </Screen>
  );
}
